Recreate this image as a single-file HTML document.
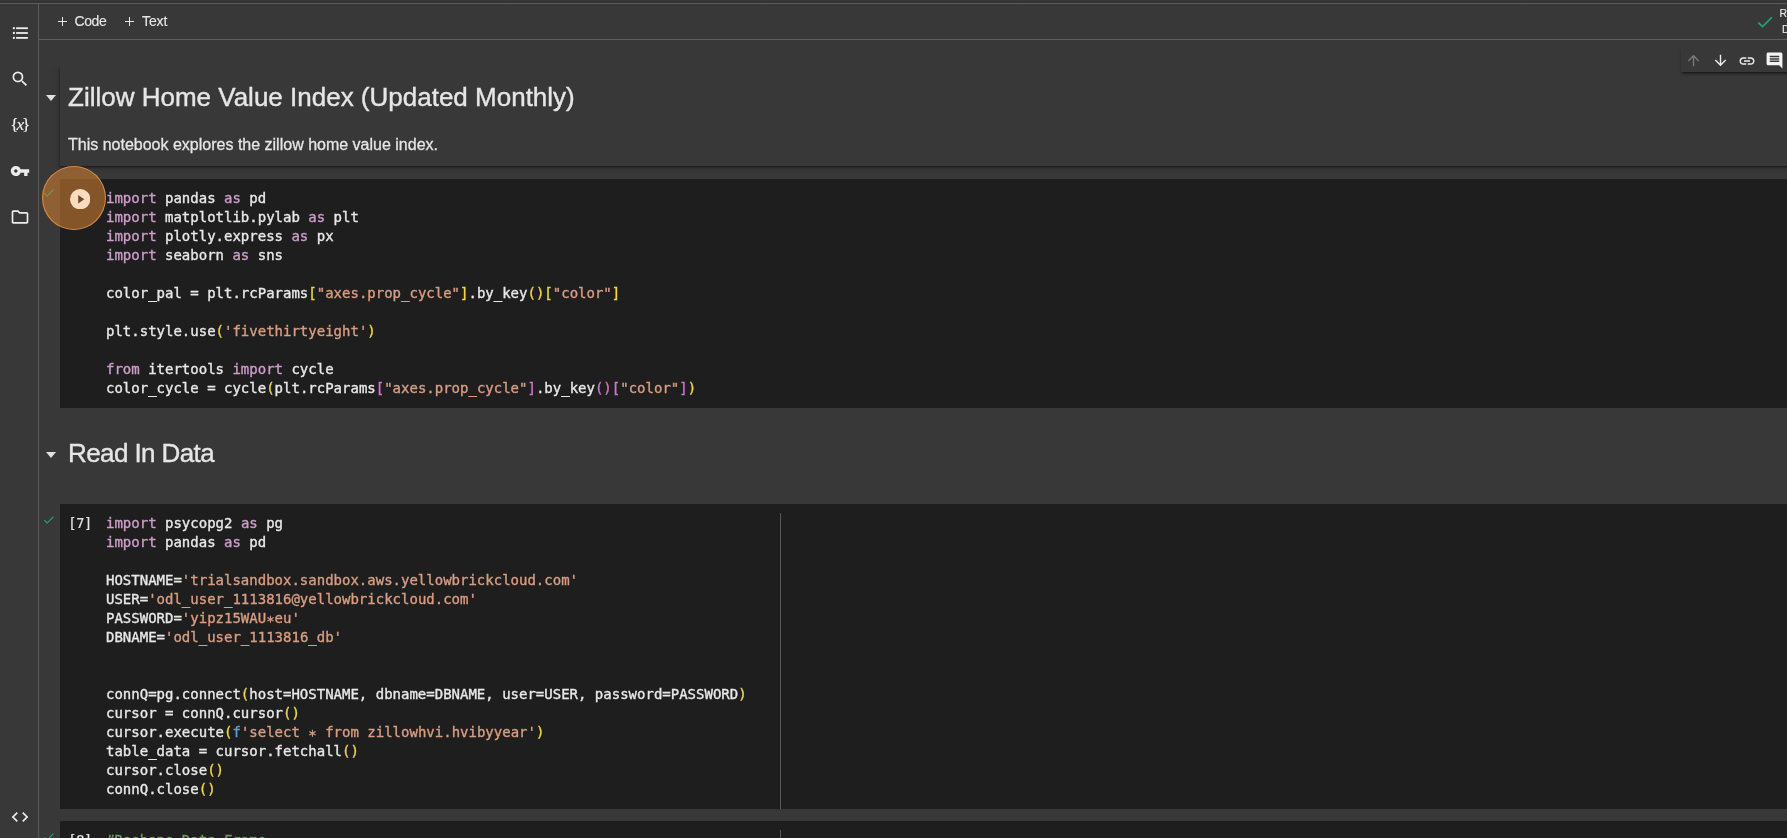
<!DOCTYPE html>
<html lang="en">
<head>
<meta charset="utf-8">
<title>Zillow Home Value Index - Colaboratory</title>
<style>
*{box-sizing:border-box;margin:0;padding:0}
html,body{width:1787px;height:838px;overflow:hidden;background:#383838}
body{position:relative;font-family:"Liberation Sans",sans-serif;color:#e3e3e3}
.abs{position:absolute}
#topstrip{left:0;top:0;width:1787px;height:3px;background:linear-gradient(to bottom,#383838 0%,#363636 45%,#303030 100%)}
#topline{left:0;top:3px;width:1787px;height:1px;background:#5d5d5d}
#sideline{left:38px;top:4px;width:1px;height:834px;background:#5a5a5a}
#toolline{left:39px;top:39px;width:1748px;height:1px;background:#5d5d5d}
.sideicon{position:absolute;left:10.2px;width:20px;height:20px;fill:#ececec}
.tbtn{position:absolute;top:13.400px;font-size:14px;line-height:17px;color:#e8e8e8;-webkit-text-stroke:0.12px;white-space:nowrap}
.plus{position:absolute;width:9px;height:9px}
.plus:before{content:"";position:absolute;left:0;top:4px;width:9px;height:1px;background:#e8e8e8}
.plus:after{content:"";position:absolute;left:4px;top:0;width:1px;height:9px;background:#e8e8e8}
/* text cell */
#tcell{left:60px;top:67px;width:1740px;height:99px;background:#383838;box-shadow:0 1px 2px 0 rgba(0,0,0,.45),0 2px 5px 0 rgba(0,0,0,.18),-2px 1px 8px 0 rgba(0,0,0,.09)}
#tcellmask{left:39px;top:40px;width:1748px;height:27px;background:#383838}
h1{position:absolute;font-weight:400;color:#e6e6e6;-webkit-text-stroke:0.38px;white-space:nowrap;font-size:26px;line-height:32px}
.caret{position:absolute;width:0;height:0;border-left:5.5px solid transparent;border-right:5.5px solid transparent;border-top:6px solid #e0e0e0}
#para{left:68px;top:135px;font-size:16px;line-height:20px;color:#e6e6e6;-webkit-text-stroke:0.28px;white-space:nowrap}
/* code */
.cell{position:absolute;left:60px;width:1727px;background:#1e1e1e}
pre{position:absolute;left:106px;font-family:"DejaVu Sans Mono","Liberation Mono",monospace;font-size:14px;line-height:19px;color:#e8e8e8;white-space:pre;letter-spacing:0;-webkit-text-stroke:0.35px}
.k{color:#cf9ccb}
.s{color:#d89d82}
.y{color:#f0d545}
.p{color:#d670d0}
.c{color:#73995f}
.f{color:#5c9cd2}
.ec{position:absolute;left:68.300px;font-family:"DejaVu Sans Mono","Liberation Mono",monospace;font-size:13.600px;line-height:19px;color:#e4e4e4;white-space:pre;letter-spacing:-0.3px;-webkit-text-stroke:0.2px}
.ruler{position:absolute;left:780px;width:1px;background:#585858}
.chk{position:absolute}
.ast{position:relative;top:2.500px}
/* cell toolbar */
#ctb{left:1681px;top:47px;width:120px;height:25px;background:#383838;box-shadow:0 2px 2px -1px rgba(0,0,0,.55),0 3px 4px -1px rgba(0,0,0,.25)}
#halo{left:42px;top:166px;width:64.300px;height:64.300px;border-radius:50%;background:rgba(214,128,52,.56);border:1.5px solid rgba(236,150,75,.85)}
</style>
</head>
<body>
<div id="root" style="position:absolute;left:0;top:0;width:1787px;height:838px;will-change:transform">
<div class="abs" id="topstrip"></div>
<div class="abs" id="topline"></div>
<div class="abs" id="sideline"></div>
<div class="abs" id="toolline"></div>

<!-- sidebar icons -->
<svg class="abs" style="left:10px;top:23px;width:20px;height:20px" viewBox="0 0 20 20" fill="#ececec"><circle cx="3.900" cy="5.200" r="1.150"/><circle cx="3.900" cy="10" r="1.150"/><circle cx="3.900" cy="14.900" r="1.150"/><rect x="6.100" y="4.300" width="11.800" height="1.800"/><rect x="6.100" y="9.100" width="11.800" height="1.800"/><rect x="6.100" y="14" width="11.800" height="1.800"/></svg>
<svg class="sideicon" style="top:69px" viewBox="0 0 24 24"><path d="M15.5 14h-.79l-.28-.27A6.47 6.47 0 0 0 16 9.5 6.5 6.5 0 1 0 9.500 16c1.610 0 3.090-.590 4.230-1.570l.27.28v.79l5 4.990L20.490 19l-4.990-5zm-6 0C7.010 14 5 11.990 5 9.500S7.010 5 9.500 5 14 7.010 14 9.500 11.990 14 9.500 14z"/></svg>
<div class="abs" style="left:6.700px;top:113.400px;width:25px;height:24px;text-align:center;font-family:'Liberation Serif',serif;font-size:17.300px;line-height:24px;color:#f2f2f2;letter-spacing:-2.1px;-webkit-text-stroke:0.12px #f2f2f2">{<i>x</i>}</div>
<svg class="sideicon" style="top:161px" viewBox="0 0 24 24"><path d="M12.650 10A5.990 5.990 0 0 0 7 6c-3.310 0-6 2.690-6 6s2.690 6 6 6a5.990 5.990 0 0 0 5.650-4H17v4h4v-4h2v-4H12.650zM7 14c-1.100 0-2-.9-2-2s.9-2 2-2 2 .9 2 2-.9 2-2 2z"/></svg>
<svg class="sideicon" style="top:207px" viewBox="0 0 24 24"><path d="M9.170 6l2 2H20v10H4V6h5.170M10 4H4c-1.100 0-1.990.9-1.990 2L2 18c0 1.100.9 2 2 2h16c1.100 0 2-.9 2-2V8c0-1.100-.9-2-2-2h-8l-2-2z"/></svg>
<svg class="sideicon" style="top:806.5px" viewBox="0 0 24 24"><path d="M9.400 16.600L4.800 12l4.600-4.600L8 6l-6 6 6 6 1.400-1.400zm5.200 0l4.600-4.600-4.600-4.600L16 6l6 6-6 6-1.400-1.400z"/></svg>

<!-- toolbar -->
<div class="plus" style="left:58px;top:17px"></div>
<div class="tbtn" id="tcode" style="left:74.500px;letter-spacing:-0.4px">Code</div>
<div class="plus" style="left:125px;top:17px"></div>
<div class="tbtn" id="ttext" style="left:142px;letter-spacing:-0.1px">Text</div>
<svg class="abs" style="left:1755px;top:12px;width:20px;height:20px" viewBox="0 0 24 24"><path d="M9 16.170L4.830 12l-1.420 1.410L9 19 21 7l-1.410-1.410z" fill="#26a37c"/></svg>
<div class="tbtn" style="left:1779.500px;top:5.300px;font-size:10.500px;line-height:16.100px">RAM<br><span style="padding-left:2.500px">Disk</span></div>

<!-- selected text cell -->
<div class="abs" id="tcell"></div>
<div class="abs" id="tcellmask"></div>
<div class="abs" id="toolline2" style="left:39px;top:39px;width:1748px;height:1px;background:#5d5d5d"></div>
<div class="caret" style="left:45.500px;top:95.300px"></div>
<h1 id="h1a" style="left:68px;top:80.500px">Zillow Home Value Index (Updated Monthly)</h1>
<div class="abs" id="para">This notebook explores the zillow home value index.</div>

<!-- floating cell toolbar -->
<div class="abs" id="ctb"></div>
<svg class="abs" style="left:1685px;top:52px;width:17px;height:17px" viewBox="0 0 24 24"><path d="M4 12l1.410 1.410L11 7.830V20h2V7.830l5.580 5.590L20 12l-8-8-8 8z" fill="#7a7a7a"/></svg>
<svg class="abs" style="left:1712px;top:52px;width:17px;height:17px" viewBox="0 0 24 24"><path d="M20 12l-1.410-1.410L13 16.170V4h-2v12.170l-5.580-5.590L4 12l8 8 8-8z" fill="#ececec"/></svg>
<svg class="abs" style="left:1738px;top:52px;width:18px;height:18px" viewBox="0 0 24 24"><path d="M3.900 12c0-1.710 1.390-3.100 3.100-3.100h4V7H7c-2.760 0-5 2.240-5 5s2.240 5 5 5h4v-1.900H7c-1.710 0-3.100-1.390-3.100-3.100zM8 13h8v-2H8v2zm9-6h-4v1.900h4c1.710 0 3.100 1.390 3.100 3.100s-1.390 3.100-3.100 3.100h-4V17h4c2.760 0 5-2.240 5-5s-2.240-5-5-5z" fill="#ececec"/></svg>
<svg class="abs" style="left:1765px;top:51px;width:19px;height:19px" viewBox="0 0 24 24"><path d="M21.990 4c0-1.100-.89-2-1.990-2H4c-1.100 0-2 .9-2 2v12c0 1.100.9 2 2 2h14l4 4-.010-18zM18 14H6v-2h12v2zm0-3H6V9h12v2zm0-3H6V6h12v2z" fill="#f4f4f4"/></svg>

<!-- code cell 1 -->
<div class="cell" style="top:179px;height:229px"></div>
<pre style="top:189px"><span class="k">import</span> pandas <span class="k">as</span> pd
<span class="k">import</span> matplotlib.pylab <span class="k">as</span> plt
<span class="k">import</span> plotly.express <span class="k">as</span> px
<span class="k">import</span> seaborn <span class="k">as</span> sns

color_pal = plt.rcParams<span class="y">[</span><span class="s">"axes.prop_cycle"</span><span class="y">]</span>.by_key<span class="y">()[</span><span class="s">"color"</span><span class="y">]</span>

plt.style.use<span class="y">(</span><span class="s">'fivethirtyeight'</span><span class="y">)</span>

<span class="k">from</span> itertools <span class="k">import</span> cycle
color_cycle = cycle<span class="y">(</span>plt.rcParams<span class="p">[</span><span class="s">"axes.prop_cycle"</span><span class="p">]</span>.by_key<span class="p">()[</span><span class="s">"color"</span><span class="p">]</span><span class="y">)</span></pre>

<!-- run button + cursor halo -->
<svg class="abs" style="left:42.400px;top:185.800px;width:13.600px;height:13.600px" viewBox="0 0 24 24"><path d="M9 16.170L4.830 12l-1.420 1.410L9 19 21 7l-1.410-1.410z" fill="#26a37c"/></svg>
<div class="abs" id="halo"></div>
<svg class="abs" style="left:69.800px;top:188.900px;width:20.400px;height:20.400px" viewBox="0 0 20 20"><circle cx="10" cy="10" r="10" fill="#fbdcbf"/><path d="M8 5.900L14 10L8 14.100z" fill="#74492a"/></svg>

<!-- section 2 -->
<div class="caret" style="left:45.500px;top:451.500px"></div>
<h1 id="h1b" style="left:68px;top:437px;letter-spacing:-0.6px">Read In Data</h1>

<!-- code cell 2 -->
<div class="cell" style="top:504px;height:305px"></div>
<div class="ruler" style="top:513px;height:296px"></div>
<svg class="chk" style="left:42.300px;top:512.500px;width:13.600px;height:13.600px" viewBox="0 0 24 24"><path d="M9 16.170L4.830 12l-1.420 1.410L9 19 21 7l-1.410-1.410z" fill="#26a37c"/></svg>
<div class="ec" style="top:514px">[7]</div>
<pre style="top:514px"><span class="k">import</span> psycopg2 <span class="k">as</span> pg
<span class="k">import</span> pandas <span class="k">as</span> pd

HOSTNAME=<span class="s">'trialsandbox.sandbox.aws.yellowbrickcloud.com'</span>
USER=<span class="s">'odl_user_1113816@yellowbrickcloud.com'</span>
PASSWORD=<span class="s">'yipz15WAU<span class="ast">*</span>eu'</span>
DBNAME=<span class="s">'odl_user_1113816_db'</span>


connQ=pg.connect<span class="y">(</span>host=HOSTNAME, dbname=DBNAME, user=USER, password=PASSWORD<span class="y">)</span>
cursor = connQ.cursor<span class="y">()</span>
cursor.execute<span class="y">(</span><span class="f">f</span><span class="s">'select <span class="ast">*</span> from zillowhvi.hvibyyear'</span><span class="y">)</span>
table_data = cursor.fetchall<span class="y">()</span>
cursor.close<span class="y">()</span>
connQ.close<span class="y">()</span></pre>

<!-- code cell 3 (cut off) -->
<div class="cell" style="top:821px;height:40px"></div>
<div class="ruler" style="top:830px;height:20px"></div>
<svg class="chk" style="left:42.300px;top:829.500px;width:13.600px;height:13.600px" viewBox="0 0 24 24"><path d="M9 16.170L4.830 12l-1.420 1.410L9 19 21 7l-1.410-1.410z" fill="#26a37c"/></svg>
<div class="ec" style="top:831px">[8]</div>
<pre style="top:831px"><span class="c">#Reshape Data Frame</span></pre>
</div>
</body>
</html>
